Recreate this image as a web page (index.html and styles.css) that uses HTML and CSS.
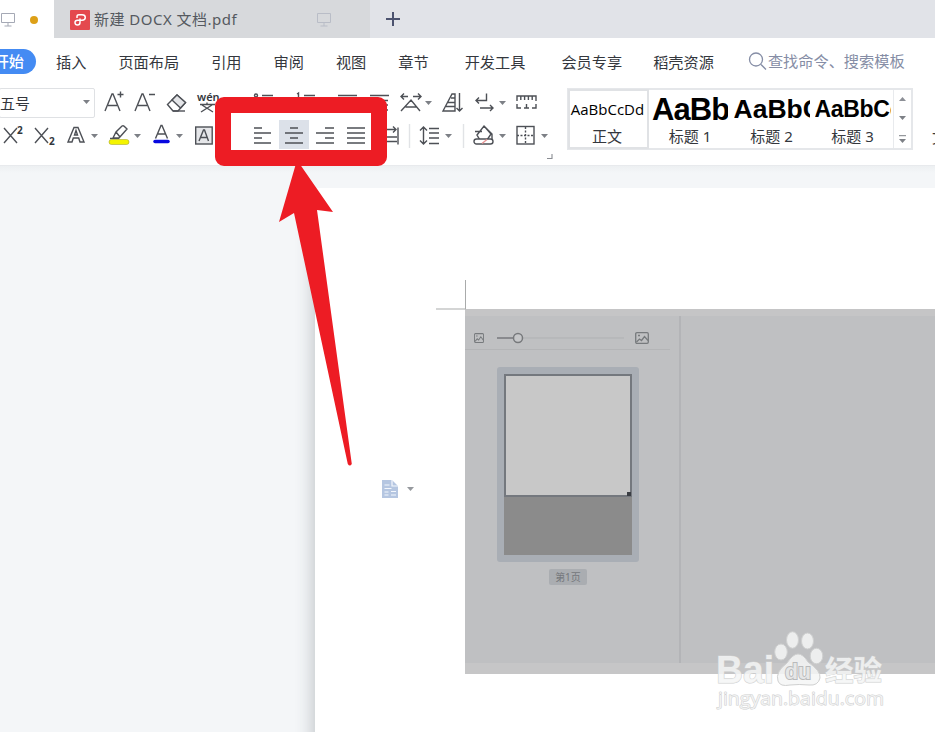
FILE: index.html
```html
<!DOCTYPE html>
<html lang="zh-CN">
<head>
<meta charset="utf-8">
<title>新建 DOCX 文档.pdf</title>
<link rel="stylesheet" href="styles.css">
</head>
<body>
<svg class="defs" width="0" height="0">
  <symbol id="caret" viewBox="0 0 7 4"><path d="M0 0h7L3.500 4z" fill="#7d8086"/></symbol>
  <symbol id="monitor" viewBox="0 0 16 16"><path d="M1.500 1.500h13v9h-13zM8 11v3M4.500 14h7" fill="none" stroke="currentColor"/></symbol>
  <symbol id="photo" viewBox="0 0 14 12" preserveAspectRatio="none"><rect x=".7" y=".7" width="12.600" height="10.600" rx="1.200" fill="none" stroke="#777a7d" stroke-width="1.300"/><path d="M1.500 10l3-3 2 1.500 3-4 3.500 4M3 3.500h2" fill="none" stroke="#777a7d" stroke-width="1.300"/></symbol>
</svg>
<div class="app">
  <header class="tabs">
    <div class="tab-active"><svg class="mon" width="16" height="16"><use href="#monitor"/></svg><i class="dot"></i></div>
    <div class="tab">
      <svg width="20" height="20" viewBox="0 0 20 20"><rect width="20" height="20" rx="1" fill="#e4494e"/><path d="M7 8V6.500Q7 4.800 9 4.800H12Q15.300 4.800 15.300 7.500T12 10.200H7.500Q5 10.200 5 12.600T7.500 15Q10 15 10 12.500V8.500" fill="none" stroke="#fff" stroke-width="1.500"/></svg>
      <span class="tab-title">新建 DOCX 文档.pdf</span>
      <svg class="mon faint" width="16" height="16"><use href="#monitor"/></svg>
    </div>
    <svg class="plus" width="16" height="16"><path d="M8 1v14M1 8h14" stroke="#4c536f" stroke-width="2"/></svg>
  </header>
  <nav class="menu">
    <span class="start">开始</span><span>插入</span><span>页面布局</span><span>引用</span><span>审阅</span><span>视图</span><span>章节</span><span>开发工具</span><span>会员专享</span><span>稻壳资源</span>
    <span class="search"><svg width="20" height="20"><circle cx="8" cy="8.500" r="6.500" fill="none" stroke="#858da5" stroke-width="1.300"/><path d="M13 13.500l5 5" stroke="#858da5" stroke-width="1.300"/></svg>查找命令、搜索模板</span>
  </nav>
  <section class="ribbon">
    <div class="tools">
      <div class="row row1">
        <div class="combo">五号<svg width="7" height="4"><use href="#caret"/></svg></div>
        <svg class="ic"><path d="M0 24L7 7h1l7 17M3 18.500h9M12.500 7.500h6M15.500 4.500v6"/></svg>
        <svg class="ic"><path d="M0 24L7 7h1l7 17M3 18.500h9M14 7.500h6"/></svg>
        <svg class="ic"><path d="M1.500 17.500L11 8l8.500 7.500L12 24H7z" fill="#fff"/><path d="M6 13l8.500 8 5-5.500L11 8z" fill="#e4e5e8"/><path d="M7 24h12"/></svg>
        <svg class="ic"><text x="0" y="14" class="wen">wén</text><path d="M3 17.500h15M10 15.500v2M5 18l11 7M15 18L4 25"/></svg>
        <svg class="ic"><circle cx="3" cy="8.500" r="1.500"/><path d="M9 8.500h11M9 15h11"/></svg>
        <svg class="ic"><path d="M2 7l1.500-1v5M9 8.500h11M9 15h11"/></svg>
        <svg class="ic"><path d="M0 8.500h19M9 14h10"/></svg>
        <svg class="ic"><path d="M0 8.500h19M6 13.500h12M6 18h12M0 23h18"/></svg>
        <svg class="ic"><path d="M1 9.500h7M4 6.500l-3 3 3 3M13 9.500h8M18 6.500l3 3-3 3M1 24L11 13l9 11M5.500 20h11"/><use href="#caret" x="25" y="14" width="7" height="4"/></svg>
        <svg class="ic"><path d="M1 24L10 7h3v17zM9 11h4M6 15.500h7M4 19.500h9M17.500 6v18M14.500 21l3 3 3-3"/></svg>
        <svg class="ic"><path d="M11.500 6.500v7H1M4 10.500l-3 3 3 3M5 21h13M15 18l3 3-3 3"/><use href="#caret" x="24" y="14" width="7" height="4"/></svg>
        <svg class="ic"><path d="M1 14V9h19v5M4.800 9v4M8.600 9v4M12.400 9v4M16.200 9v4M1 17v4h4M8 21h5M10.500 17v4M20 17v4h-4"/></svg>
      </div>
      <div class="row row2">
        <svg class="ic"><path d="M4 8l13 15M17 8L4 23"/><text x="17" y="14" class="num">2</text></svg>
        <svg class="ic"><path d="M0 8l13 15M13 8L0 23"/><text x="14" y="25" class="num">2</text></svg>
        <svg class="ic"><path d="M1 22L7 7.500h4L17 22h-4l-1.300-4H6.300L5 22zM7.500 15h3L9 10.500z"/><use href="#caret" x="24" y="14" width="7" height="4"/></svg>
        <svg class="ic"><path d="M4 18l3-6 6-6q1.500-1 3 1l2 2-8 9zM7 12l4 5M1 18.500h9"/><rect x="0" y="19.500" width="20" height="5" rx="2.500" fill="#f4f400" stroke="#aaa934" stroke-width=".6"/><use href="#caret" x="25" y="14" width="7" height="4"/></svg>
        <svg class="ic"><path d="M2.500 18.500L8 5.500h1l5.500 13M5 14h7.500"/><path d="M2 21.500h13" class="blue"/><use href="#caret" x="23" y="14" width="7" height="4"/></svg>
        <svg class="ic"><rect x=".7" y="7" width="16.500" height="17" fill="#e5e6e9"/><path d="M4 21l4.500-11h1l4 11M6 17.500h6"/></svg>
        <svg class="ic"><path d="M1 8h8M1 13h17M1 18h8M1 23h17"/></svg>
        <div class="selected"><svg class="ic"><path d="M11 8h8M6 13h18M11 18h8M6 23h18"/></svg></div>
        <svg class="ic"><path d="M9 8h9M0 13h18M9 18h9M0 23h18"/></svg>
        <svg class="ic"><path d="M0 8h18M0 13h18M0 18h18M0 23h18"/></svg>
        <svg class="ic"><path d="M7 9.500h11M15 6.500l3 3-3 3M8 17h11M8 21.500h11M20 7.500v17"/><path d="M31.500 4v24" class="rule"/></svg>
        <svg class="ic"><path d="M3.500 7v17M0 10.500L3.500 7 7 10.500M0 20.500L3.500 24 7 20.500M9 8.500h10M9 13h10M9 18h10M9 23.500h10"/><use href="#caret" x="25" y="14" width="7" height="4"/><path d="M43.500 4v24" class="rule"/></svg>
        <svg class="ic"><path d="M2 11.500h7M4 15l7-9 7 8-4 6H7zM11 6l8 8v5"/><rect x="1" y="19" width="19" height="5" rx="2.500" fill="#fff"/><path d="M9 23.500l5-4" class="pink"/><use href="#caret" x="26" y="14" width="7" height="4"/></svg>
        <svg class="ic"><rect x="1" y="6.500" width="17" height="17.500"/><path d="M9.500 7v17M1 15.500h17" stroke-dasharray="2 1.500"/><use href="#caret" x="25" y="14" width="7" height="4"/><path d="M36 34v4.500h-5" class="corner"/></svg>
      </div>
    </div>
    <div class="gallery">
      <div class="style chosen"><span class="sample s0">AaBbCcDd</span><span class="name">正文</span></div>
      <div class="style"><span class="sample s1">AaBb</span><span class="name">标题 1</span></div>
      <div class="style"><span class="sample s2">AaBbC</span><span class="name">标题 2</span></div>
      <div class="style"><span class="sample s3">AaBbCc</span><span class="name">标题 3</span></div>
      <div class="scroll"><svg width="7" height="4"><path d="M0 4h7L3.500 0z" fill="#8c8f96"/></svg><svg width="7" height="4"><use href="#caret"/></svg><svg width="7" height="8"><path d="M0 .7h7" stroke="#7d8086"/><use href="#caret" y="4" width="7" height="4"/></svg></div>
    </div>
    <div class="next"><span>文</span></div>
  </section>
  <main class="canvas">
    <div class="page">
      <div class="gutter">
        <svg width="34" height="20"><path d="M1 1h10l6 6v12H1z" fill="#b5c6e1"/><path d="M11 1v6h6M3.500 6h5M3.500 9.500h7M3.500 13h4M3.500 16h4M10 12.500h5M10 16h5" fill="none" stroke="#f3f7fd" stroke-width="1.200"/><use href="#caret" x="26" y="8" width="7" height="4" opacity=".8"/></svg>
      </div>
      <div class="picture">
        <div class="panel">
          <div class="zoombar"><svg width="10" height="10"><use href="#photo"/></svg><svg class="slider" width="127" height="12"><path d="M21 6h106" stroke="#afb1b3"/><path d="M0 6h16" stroke="#77797c" stroke-width="1.500"/><circle cx="21" cy="6" r="4.500" fill="#c6c7c9" stroke="#77797c" stroke-width="1.500"/></svg><svg width="14" height="12"><use href="#photo"/></svg></div>
          <div class="thumb"><div class="sheet"><i></i></div><div class="rest"></div></div>
          <div class="label">第1页</div>
        </div>
      </div>
    </div>
  </main>
  <svg class="marks" width="935" height="732">
    <path d="M465.500 280v29H436" fill="none" stroke="#a9abab"/>
    <rect x="223" y="105" width="156" height="53" rx="1" fill="none" stroke="#ed1c24" stroke-width="16" stroke-linejoin="round"/>
    <path d="M297 160L279 222l15-9 53.800 251q2 3 4 0L317 210l16 2z" fill="#ed1c24"/>
    <g class="brand">
      <ellipse cx="781" cy="652" rx="6.300" ry="8"/><ellipse cx="792.500" cy="640" rx="6" ry="8.300"/><ellipse cx="807.500" cy="641" rx="6" ry="8"/><ellipse cx="816.500" cy="656" rx="6.300" ry="7.800"/>
      <path d="M778 681q-3-9 9-18 6-9 11-9t10 8q13 9 12 16-2 8-11 7-10-1-19 0-10 2-12-4z"/>
      <text x="716" y="683" class="bai" textLength="58" lengthAdjust="spacingAndGlyphs">Bai</text>
      <text x="785" y="679" class="du" textLength="26" lengthAdjust="spacingAndGlyphs">du</text>
      <text x="825" y="681" class="exp" textLength="57">经验</text>
      <text x="718" y="705" class="url" textLength="166" lengthAdjust="spacingAndGlyphs">jingyan.baidu.com</text>
    </g>
  </svg>
</div>
</body>
</html>
```
FILE: styles.css
```css
* { box-sizing: border-box; }
body { margin: 0; font-family: "Noto Sans", "Noto Sans CJK SC", sans-serif; color: #34373d; overflow: hidden; }
svg { display: block; flex: none; }
.defs { position: absolute; }
.app { position: relative; width: 935px; height: 732px; overflow: hidden; background: #fff; }

.tabs { height: 38px; background: #e1e3e8; display: flex; align-items: center; }
.tab-active { width: 54px; height: 38px; background: #fff; display: flex; align-items: center; padding-top: 2px; }
.mon { color: #a5a9b5; }
.dot { width: 8px; height: 8px; border-radius: 50%; background: #dda017; margin-left: 14px; }
.tab { width: 316px; height: 38px; padding: 1px 0 0 16px; background: #d7d9dc; display: flex; align-items: center; }
.tab-title { width: 221px; margin: -2px 0 0 4px; font-size: 15px; letter-spacing: .48px; color: #555960; white-space: nowrap; }
.faint { margin-left: 1px; color: #b9bdc7; }
.plus { margin-left: 15px; }

.menu { height: 48px; display: flex; align-items: center; font-size: 15.2px; white-space: nowrap; line-height: 26px; padding-bottom: 1px; }
.menu span { margin-right: 32px; }
.menu .start { width: 36px; height: 25px; line-height: 24px; margin-right: 20px; border-radius: 0 13px 13px 0; background: #448bf3; color: #fff; font-weight: 500; direction: rtl; padding-right: 12px; overflow: hidden; }
.menu span:nth-child(7) { margin-right: 36px; }
.menu span:nth-child(8) { margin-right: 36px; }
.menu span:nth-child(9) { margin-right: 31px; }
.menu span:nth-child(10) { margin-right: 34px; }
.menu .search { display: flex; align-items: center; margin: -1px 0 0; color: #858da5; }

.ribbon { height: 80px; display: flex; align-items: flex-start; border-bottom: 1px solid #e8eaed; }
.tools { width: 567px; height: 78px; padding-top: 1px; }
.row { display: grid; height: 32px; }
.row1 { grid-template-columns: 105px 30px 31px 31px 56px 42px 43px 32px 30px 42px 33px 41px 34px; }
.row2 { grid-template-columns: 35px 32px 42px 44px 42px 58px 26px 37px 31px 31px 42px 53px 43px 34px; margin-top: 1px; }
.combo { width: 96px; height: 30px; margin: 1px 0 0 -1px; padding: 0 4px 2px 0; border: 1px solid #dfe1e4; border-radius: 2px; display: flex; align-items: center; justify-content: space-between; font-size: 15px; }
.ic { width: 20px; height: 32px; overflow: visible; fill: none; stroke: #4d5056; stroke-width: 1.4; }
.ic use { stroke: none; }
.ic text { fill: #34373d; stroke: none; }
.ic .corner { stroke: #898c92; stroke-width: 1.1; }
.wen { font: 600 11px "Noto Sans"; }
.num { font: 700 10px "Noto Sans"; }
.ic .blue { stroke: #0708df; stroke-width: 3.5; stroke-linecap: round; }
.ic .rule { stroke: #e1e3e6; }
.ic .pink { stroke: #e69292; }
.selected { width: 30px; height: 29px; background: #dce1e9; }
.selected .ic { margin-top: 0; }
.gallery { width: 346px; height: 62px; margin-top: 2px; border: 2px solid #e5e7ea; display: grid; grid-template-columns: 80px 82px 81px 81px 18px; }
.style { display: flex; flex-direction: column; align-items: center; overflow: hidden; }
.chosen { margin: -1px 0 -1px -1px; padding-right: 3px; box-shadow: inset 0 0 0 2px #e0e2e5; }
.sample { width: 76px; height: 38px; line-height: 39px; overflow: hidden; white-space: nowrap; color: #000; font-weight: 700; font-family: "Liberation Sans", sans-serif; }
.name { font-size: 15px; line-height: 16px; }
.style .s0 { width: 76px; height: 39px; margin-left: 1px; font: 400 15px/41px "Open Sans", sans-serif; text-align: center; }
.s1 { font-size: 31px; letter-spacing: -.9px; }
.s2 { font-size: 26.5px; }
.s3 { font-size: 23px; letter-spacing: -.3px; }
.scroll { display: flex; flex-direction: column; align-items: center; justify-content: space-between; padding: 7px 0 5px; border-left: 1px solid #e8eaed; }
.next { width: 22px; height: 78px; padding-top: 40px; overflow: hidden; font-size: 15px; }
.next span { display: block; margin-left: 19px; width: 15px; }

.canvas { height: 566px; padding: 22px 0 0 315px; background: linear-gradient(#edf0f2, #f4f6f8 7px); }
.page { height: 544px; display: flex; background: #fff; box-shadow: -3px 24px 16px #c4c8cb; clip-path: inset(0 0 0 -24px); }
.gutter { width: 150px; padding: 291px 0 0 66px; }
.picture { width: 470px; height: 365px; margin-top: 120.5px; padding-top: 7px; border-bottom: 11px solid #c6c6c7; background: #bfc0c2; box-shadow: inset 0 7px #c5c5c6; }
.panel { width: 216px; height: 347px; border-right: 2px solid #b3b4b7; display: flex; flex-direction: column; }
.zoombar { width: 205px; height: 34px; padding: 12px 0 0 9px; display: flex; align-items: center; border-bottom: 1px solid #b4b5b7; }
.slider { margin: 0 11px 0 13px; }
.thumb { width: 142px; height: 195px; margin: 17px 0 0 32px; padding: 7px; border-radius: 3px; background: #a9aeb5; }
.sheet { height: 123px; border: 2px solid #74787e; background: #c8c8c8; display: flex; align-items: flex-end; justify-content: flex-end; }
.sheet i { width: 4px; height: 4px; margin: 0 -1px -1px 0; background: #3b3e44; }
.rest { height: 58px; background: #8b8b8b; }
.label { width: 38px; height: 16px; margin: 7px 0 0 84px; border-radius: 2px; background: #aaadb1; color: #74777b; font-size: 10px; line-height: 16px; text-align: center; }

.marks { position: absolute; left: 0; top: 0; }
.brand { fill: rgba(245, 246, 246, .85); stroke: #cfd0d0; stroke-width: 1; }
.brand text { paint-order: stroke; }
.bai { font: 700 38px "Liberation Sans"; }
.du { font: 700 22px "Liberation Sans"; fill: #e5e6e6; }
.brand .du { stroke: #b9babb; stroke-width: 2; }
.exp { font: 700 28.5px "Noto Sans CJK SC"; }
.url { font: 400 19px "Open Sans"; }
```
